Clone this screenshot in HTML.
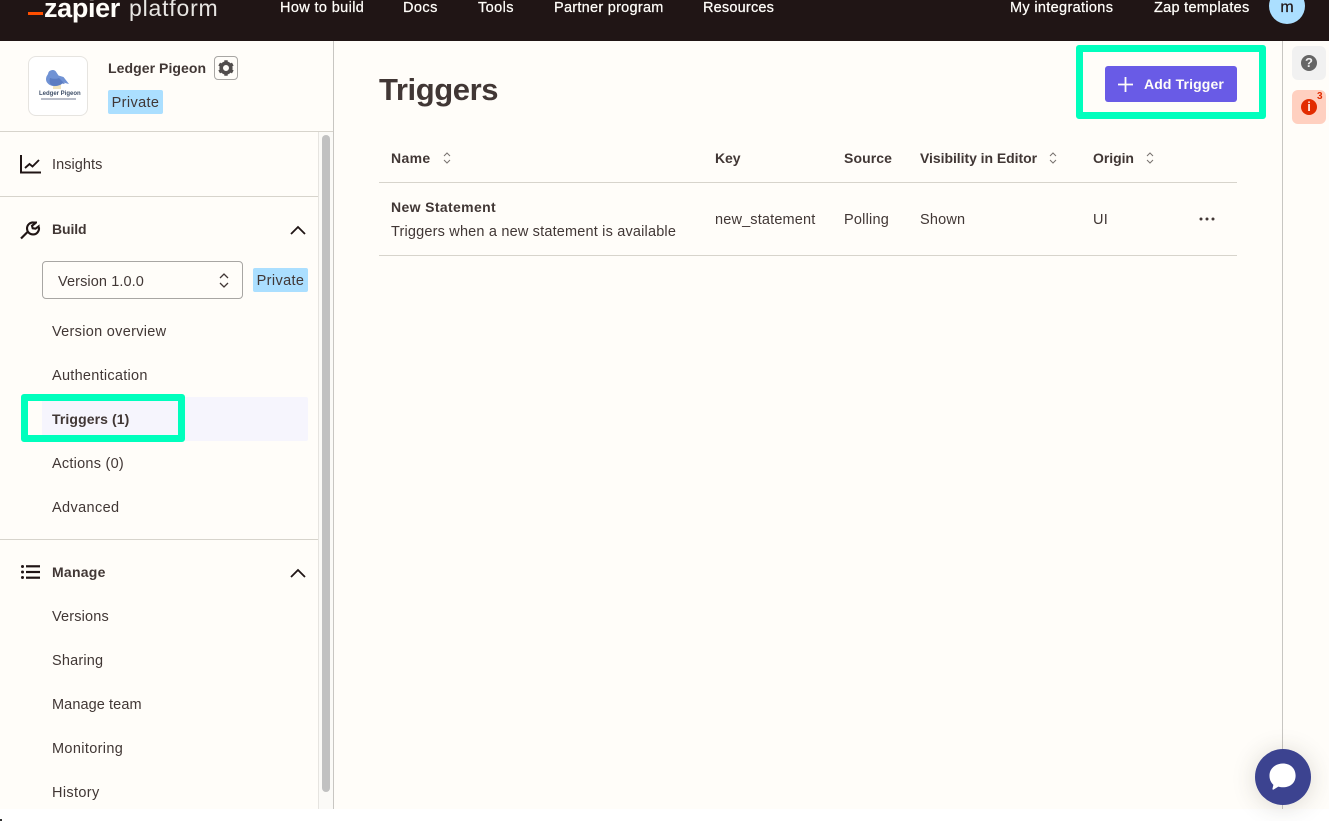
<!DOCTYPE html>
<html lang="en"><head><meta charset="utf-8"><title>Triggers</title>
<style>
*{box-sizing:border-box}
html,body{margin:0;padding:0;width:1329px;height:821px;overflow:hidden;background:#fff}
body{position:relative;font-family:"Liberation Sans",sans-serif;color:#403f3e;font-size:14px}
.a{position:absolute;white-space:nowrap}
.t{position:absolute;white-space:nowrap;line-height:22px;font-size:14.5px;letter-spacing:.27px;color:#413735}
.b{font-weight:700;letter-spacing:.1px;font-size:14px;line-height:20px}
.n{position:absolute;white-space:nowrap;line-height:20px;font-size:14.5px;font-weight:400;color:#fffdf9;top:-2px;letter-spacing:.2px;-webkit-text-stroke:.25px #fffdf9}
.tag{position:absolute;background:#abdfff;border-radius:2px;height:24px;line-height:26px;width:55px;text-align:center;font-size:14.5px;letter-spacing:.37px;color:#413735}
svg{position:absolute;overflow:visible}
</style></head><body>
<div class="a" style="left:0;top:0;width:1329px;height:809px;background:#fffdf9"></div>
<div class="a" style="left:0;top:0;width:1329px;height:41px;background:#201515"></div>

<!-- header -->
<div class="a" style="left:28px;top:12px;width:15px;height:3px;background:#ff4f00"></div>
<div class="a" style="left:44px;top:-7px;line-height:30px;font-size:27px;font-weight:700;color:#fffdf9;letter-spacing:-.35px">zapier</div>
<div class="a" style="left:129px;top:-7px;line-height:30px;font-size:23px;color:#e7e5e2;letter-spacing:.8px">platform</div>
<div class="n" style="left:280px;letter-spacing:.37px">How to build</div>
<div class="n" style="left:403px;letter-spacing:.45px">Docs</div>
<div class="n" style="left:478px;letter-spacing:.4px">Tools</div>
<div class="n" style="left:554px;letter-spacing:.27px">Partner program</div>
<div class="n" style="left:703px">Resources</div>
<div class="n" style="left:1010px;letter-spacing:.33px">My integrations</div>
<div class="n" style="left:1154px;letter-spacing:.28px">Zap templates</div>
<div class="a" style="left:1269px;top:-12px;width:36px;height:36px;border-radius:50%;background:#abdfff;text-align:center;line-height:40px;font-size:16px;color:#201515;-webkit-text-stroke:.2px #201515">m</div>

<!-- sidebar frame -->
<div class="a" style="left:333px;top:41px;width:1px;height:768px;background:#c8c6c2"></div>
<div class="a" style="left:318px;top:132px;width:15px;height:677px;background:#fbfaf7;border-left:1px solid #e6e4e0"></div>
<div class="a" style="left:322px;top:135px;width:8px;height:657px;border-radius:4px;background:#c1c1c1"></div>
<div class="a" style="left:0;top:131px;width:333px;height:1px;background:#d7d4cc"></div>
<div class="a" style="left:0;top:196px;width:318px;height:1px;background:#d7d4cc"></div>
<div class="a" style="left:0;top:539px;width:318px;height:1px;background:#d7d4cc"></div>

<!-- app card -->
<div class="a" style="left:28px;top:56px;width:60px;height:60px;border:1px solid #e6e4e0;border-radius:8px;background:#fff"></div>
<svg style="left:38px;top:68px" width="40" height="36" viewBox="0 0 40 36">
<path d="M15 16h8v5h-8z" fill="#f0e4bd"/>
<path d="M10 6a4.500 4.500 0 0 1 8.500-1.500l2 3 5 1.500 5.500 7-6-1.500c-1.500 3-8 4.500-12 3-4-1.500-6-5-4.500-9z" fill="#7092d4"/>
<path d="M12 10c3 1 7 1 9 0l6 6-3-.5c-2 2-7 3-10 2-2-1-3-4-2-7.500z" fill="#5b7cc2"/>
</svg>
<div class="a" style="left:39px;top:91px;width:38px;text-align:center;font-size:6px;line-height:7px;font-weight:700;color:#3f4f68">Ledger Pigeon</div>
<div class="a" style="left:41px;top:98px;width:35px;height:2px;background:#b9bdc8"></div>
<div class="t b" style="left:108px;top:58px;letter-spacing:.07px">Ledger Pigeon</div>
<div class="a" style="left:214px;top:56px;width:24px;height:24px;border:1px solid #a8a6a3;border-radius:4px"></div>
<svg style="left:217px;top:59px" width="18" height="18" viewBox="0 0 18 18" fill="none" stroke="#514d4c"><circle cx="9" cy="9" r="4.800" stroke-width="3.600"/><path d="M9 1.200v2M9 14.800v2M2.200 5.100l1.800 1M14 11.900l1.800 1M2.200 12.900l1.800-1M14 6.100l1.800-1" stroke-width="3.400"/></svg>
<div class="tag" style="left:108px;top:90px">Private</div>

<!-- nav -->
<svg style="left:20px;top:155px" width="21" height="19" viewBox="0 0 21 19" fill="none" stroke="#201515" stroke-width="2"><path d="M1 0v17.500h20"/><path d="M5 13l4.500-4 3 2.500L19 5" stroke-width="1.900"/></svg>
<div class="t" style="left:52px;top:154px;letter-spacing:.06px">Insights</div>

<svg style="left:20px;top:219px" width="20" height="20" viewBox="0 0 20 20" fill="none" stroke="#201515"><path d="M1 19.500l6.500-6.500" stroke-width="2.200"/><path d="M17 3.500h-3.500A6 6 0 1 0 19 9c0 0-.5-1-.5-1.500l-3 2.200-2.800-.4-.7-2.500 3.500-2.800" stroke-width="2.100"/></svg>
<div class="t b" style="left:52px;top:219px;letter-spacing:-.1px">Build</div>
<svg style="left:290px;top:225px" width="16" height="10" viewBox="0 0 16 10" fill="none" stroke="#201515" stroke-width="1.800"><path d="M1 9l7-7 7 7"/></svg>

<div class="a" style="left:42px;top:261px;width:201px;height:38px;border:1px solid #a8a6a3;border-radius:4px;background:#fffdf9"></div>
<div class="t" style="left:58px;top:271px;letter-spacing:.1px">Version 1.0.0</div>
<svg style="left:219px;top:273px" width="10" height="15" viewBox="0 0 10 15" fill="none" stroke="#413735" stroke-width="1.300"><path d="M1 5l4-4 4 4M1 10l4 4 4-4"/></svg>
<div class="tag" style="left:253px;top:268px">Private</div>

<div class="t" style="left:52px;top:321px;letter-spacing:.3px">Version overview</div>
<div class="t" style="left:52px;top:365px">Authentication</div>
<div class="a" style="left:42px;top:397px;width:266px;height:44px;background:#f6f5fd;border-radius:2px"></div>
<div class="a" style="left:21px;top:394px;width:164px;height:48px;border:7px solid #00ffbd;border-radius:3px"></div>
<div class="t b" style="left:52px;top:409px">Triggers (1)</div>
<div class="t" style="left:52px;top:453px;letter-spacing:.24px">Actions (0)</div>
<div class="t" style="left:52px;top:497px;letter-spacing:.37px">Advanced</div>

<svg style="left:21px;top:564px" width="19" height="16" viewBox="0 0 19 16" fill="#201515"><rect x="0" y="1" width="3" height="3" rx="1.500"/><rect x="0" y="6.500" width="3" height="3" rx="1.500"/><rect x="0" y="12" width="3" height="3" rx="1.500"/><rect x="5" y="1.200" width="14" height="2.200"/><rect x="5" y="6.900" width="14" height="2.200"/><rect x="5" y="12.600" width="14" height="2.200"/></svg>
<div class="t b" style="left:52px;top:562px;letter-spacing:.25px">Manage</div>
<svg style="left:290px;top:568px" width="16" height="10" viewBox="0 0 16 10" fill="none" stroke="#201515" stroke-width="1.800"><path d="M1 9l7-7 7 7"/></svg>
<div class="t" style="left:52px;top:606px;letter-spacing:.16px">Versions</div>
<div class="t" style="left:52px;top:650px;letter-spacing:.19px">Sharing</div>
<div class="t" style="left:52px;top:694px;letter-spacing:.09px">Manage team</div>
<div class="t" style="left:52px;top:738px;letter-spacing:.35px">Monitoring</div>
<div class="t" style="left:52px;top:782px;letter-spacing:.35px">History</div>

<!-- main -->
<div class="a" style="left:379px;top:70px;line-height:40px;font-size:31px;font-weight:700;color:#413735;letter-spacing:-.4px">Triggers</div>
<div class="a" style="left:1076px;top:45px;width:190px;height:74px;border:7px solid #00ffbd;border-radius:3px"></div>
<div class="a" style="left:1105px;top:66px;width:132px;height:36px;background:#695be6;border-radius:3px"></div>
<svg style="left:1118px;top:77px" width="15" height="15" viewBox="0 0 15 15" stroke="#fffdf9" stroke-width="1.800"><path d="M7.500 0v15M0 7.500h15"/></svg>
<div class="a" style="left:1144px;top:74px;line-height:20px;font-size:14px;font-weight:700;color:#fffdf9;letter-spacing:.13px">Add Trigger</div>

<div class="t b" style="left:391px;top:148px;letter-spacing:.35px">Name</div>
<svg class="s" style="left:443px;top:152px" width="8" height="12" viewBox="0 0 8 12" fill="none" stroke="#77726f" stroke-width="1"><path d="M1 4l3-3 3 3M1 8l3 3 3-3"/></svg>
<div class="t b" style="left:715px;top:148px;letter-spacing:-.1px">Key</div>
<div class="t b" style="left:844px;top:148px">Source</div>
<div class="t b" style="left:920px;top:148px;letter-spacing:-.05px">Visibility in Editor</div>
<svg style="left:1049px;top:152px" width="8" height="12" viewBox="0 0 8 12" fill="none" stroke="#77726f" stroke-width="1"><path d="M1 4l3-3 3 3M1 8l3 3 3-3"/></svg>
<div class="t b" style="left:1093px;top:148px;letter-spacing:-.05px">Origin</div>
<svg style="left:1146px;top:152px" width="8" height="12" viewBox="0 0 8 12" fill="none" stroke="#77726f" stroke-width="1"><path d="M1 4l3-3 3 3M1 8l3 3 3-3"/></svg>
<div class="a" style="left:379px;top:182px;width:858px;height:1px;background:#d7d4cc"></div>
<div class="t b" style="left:391px;top:197px;letter-spacing:.36px">New Statement</div>
<div class="t" style="left:391px;top:221px;letter-spacing:.18px">Triggers when a new statement is available</div>
<div class="t" style="left:715px;top:209px;letter-spacing:.16px">new_statement</div>
<div class="t" style="left:844px;top:209px;letter-spacing:.21px">Polling</div>
<div class="t" style="left:920px;top:209px;letter-spacing:.18px">Shown</div>
<div class="t" style="left:1093px;top:209px">UI</div>
<svg style="left:1199px;top:217px" width="16" height="4" viewBox="0 0 16 4" fill="#413735"><circle cx="2" cy="2" r="1.500"/><circle cx="8" cy="2" r="1.500"/><circle cx="14" cy="2" r="1.500"/></svg>
<div class="a" style="left:379px;top:255px;width:858px;height:1px;background:#d7d4cc"></div>

<!-- right rail -->
<div class="a" style="left:1282px;top:41px;width:1px;height:768px;background:#c8c6c2"></div>
<div class="a" style="left:1292px;top:46px;width:34px;height:34px;border-radius:6px;background:#f1f1f1"></div>
<div class="a" style="left:1301px;top:55px;width:16px;height:16px;border-radius:50%;background:#666;color:#f1f1f1;font-size:13px;font-weight:700;line-height:16px;text-align:center">?</div>
<div class="a" style="left:1292px;top:90px;width:34px;height:34px;border-radius:6px;background:#ffd0c0"></div>
<div class="a" style="left:1301px;top:99px;width:16px;height:16px;border-radius:50%;background:#e22c00;color:#ffe9e0;font-size:13px;font-weight:700;line-height:16px;text-align:center">i</div>
<div class="a" style="left:1317px;top:91px;font-size:10px;line-height:12px;font-weight:700;color:#e22c00">3</div>

<!-- chat -->
<div class="a" style="left:1255px;top:749px;width:56px;height:56px;border-radius:50%;background:#3c4390;box-shadow:0 2px 24px rgba(60,55,40,.18)"></div>
<svg style="left:1269px;top:763px" width="28" height="28" viewBox="0 0 30 30"><path d="M15 .500C22.500.500 28.500 5.500 28.500 13.500S22.500 26 15 26c-1.800 0-3.500-.3-5-.7L4.800 28.500c-.6.300-1.300-.2-1.100-.9l1-4.200C2 21 .5 17.500.5 13.500.5 5.500 7.500.500 15 .500z" fill="#fff"/></svg>
<div class="a" style="left:0;top:819px;width:2px;height:2px;background:#333"></div>
</body></html>
